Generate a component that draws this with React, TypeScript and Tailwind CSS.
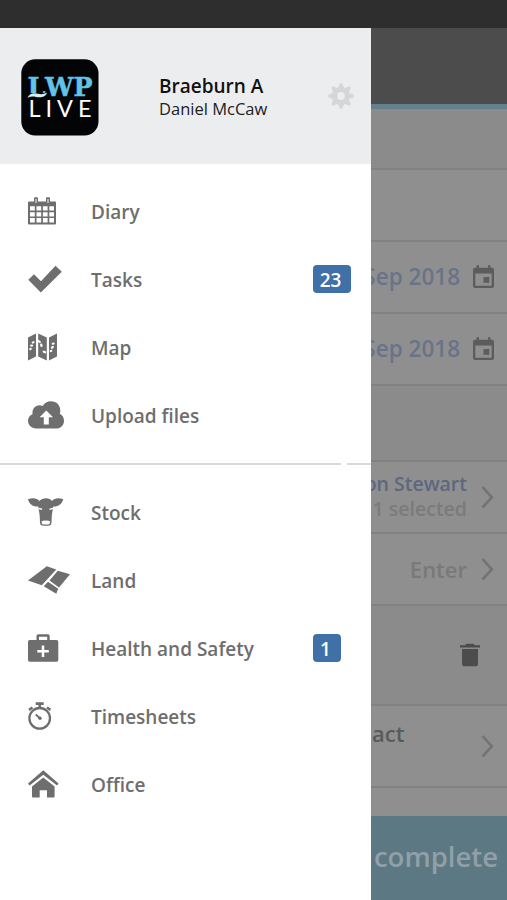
import type { ReactNode } from "react";

type MenuItem = {
  label: string;
  icon: ReactNode;
  badge?: string;
  badgeClass?: string;
};

const CalendarIcon = () => (
  <svg width="29" height="28" viewBox="0 0 29 28" className="block">
    <path
      fill="currentColor"
      fillRule="evenodd"
      d="M1 4.500h5V1.500Q6 0.300 7 0.300H9Q10 0.300 10 1.500V4.500H18V1.500Q18 0.300 19 0.300H21Q22 0.300 22 1.500V4.500H27Q28 4.500 28 5.500V26.500Q28 27.500 27 27.500H1Q0 27.500 0 26.500V5.500Q0 4.500 1 4.500ZM2 9.300V13.500H6.800V9.300ZM8.500 9.300V13.500H13.200V9.300ZM14.900 9.300V13.500H19.600V9.300ZM21.300 9.300V13.500H26V9.300ZM2 15.200V19.400H6.800V15.200ZM8.500 15.200V19.400H13.200V15.200ZM14.900 15.200V19.400H19.600V15.200ZM21.300 15.200V19.400H26V15.200ZM2 21.100V25.500H6.800V21.100ZM8.500 21.100V25.500H13.200V21.100ZM14.900 21.100V25.500H19.600V21.100ZM21.300 21.100V25.500H26V21.100Z"
    />
    <path d="M8 2v4M20 2v4" stroke="#fff" strokeWidth="1" />
  </svg>
);

const CheckIcon = () => (
  <svg width="34" height="28" viewBox="0 0 34 28" className="block">
    <path d="M.3 14.800 6 9.200 13 16.200 27.500 .8 33.800 6.700 12.800 27.500Z" fill="currentColor" />
  </svg>
);

const MapIcon = () => (
  <svg width="30" height="28" viewBox="0 0 30 28" className="block">
    <path d="M0 4.500 8 0.500V23.500L0 27.500ZM10.200 0.500 18.800 4.500V27.500L10.200 23.500ZM21 4.500 29 0.500V23.500L21 27.500Z" fill="currentColor" />
    <path
      d="M4.800 9.500l.8-.2M3.200 12.600h.8M2.300 16.200l.3-.3M10.800 8.200l1 .8M13.200 11.500l.3 1.500M15.700 18.700l1.500.6M24.800 10.700l.8-.2M24 14.800l.8-.8M22.800 18l.5-.2"
      stroke="#fff"
      strokeWidth="2.200"
      strokeLinecap="round"
    />
  </svg>
);

const CloudIcon = () => (
  <svg width="36" height="28" viewBox="0 0 36 28" className="block">
    <path
      d="M8 27.500C3.500 27.500 0 24 0 19.800 0 16.800 1.800 14.300 4.500 13.200 4 8 7.200 4.300 11.500 4.300 12.700 4.300 13.700 4.500 14.700 5 16.300 2 19.300.3 23 .3 28.500.3 32.500 4.400 32.300 10 32.300 11 32.100 11.800 31.800 12.700 34.400 14 36 16.700 36 19.700 36 24.200 32.600 27.500 28.500 27.500Z"
      fill="currentColor"
    />
    <path d="M18.300 9.500 25 16.300H20.800V23.500H15.800V16.300H11.600Z" fill="#fff" />
  </svg>
);

const CowIcon = () => (
  <svg width="36" height="28" viewBox="0 0 36 28" className="block">
    <path
      d="M0 1.200C4-.3 9-.2 11.500 3 13 1 15.500.2 18 .2S23 1 24 3C26.500-.2 31-.3 35.200 1.200 34.200 6 30 9 25 8.500 25 12 24 15 23.800 18L23.500 24.500Q23.300 27.700 20 27.700H15.500Q12.200 27.700 12 24.500L11.700 18C11.500 15 10.500 12 10.400 8.500 5 9 1 6 0 1.200Z"
      fill="currentColor"
    />
    <path d="M13.400 23.500Q14.500 22.400 17.800 22.400T22.200 23.500L21.500 26Q21 26.500 17.800 26.500T14.100 26Z" fill="#fff" />
    <path d="M10.500 9.800l3.600.8v1.400l-3.400-.8ZM25.100 9.800l-3.600.8v1.400l3.400-.8Z" fill="#fff" />
  </svg>
);

const LandIcon = () => (
  <svg width="42" height="28" viewBox="0 0 42 28" className="block">
    <path
      d="M0 14.500 18.800 .3 28.300 3.500 13.800 19.300ZM29.800 4.800 42 8.200 31 21.500 21.500 14.500ZM20 15.800 30.200 22.700 28.300 27.700 15.700 20.300Z"
      fill="currentColor"
    />
  </svg>
);

const MedkitIcon = () => (
  <svg width="31" height="28" viewBox="0 0 31 28" className="block">
    <path
      fillRule="evenodd"
      d="M8.500 6V2Q8.500 .3 10.200 .3H20Q21.700 .3 21.700 2V6H28.500Q30.300 6 30.300 7.800V26Q30.300 27.700 28.500 27.700H1.800Q0 27.700 0 26V7.800Q0 6 1.800 6ZM11 6H19.200V2.700H11Z"
      fill="currentColor"
    />
    <path d="M15 11.500V23M9.300 17.200H20.800" stroke="#fff" strokeWidth="2.500" />
  </svg>
);

const StopwatchIcon = () => (
  <svg width="24" height="28" viewBox="0 0 24 28" className="block" fill="none" stroke="currentColor">
    <circle cx="11.700" cy="16.300" r="10.300" strokeWidth="2.300" />
    <path d="M7.700 1.600H15.700M11.700 1.500V5.500M1 7.800 4.500 5.500M22.400 7.800 18.900 5.500" strokeWidth="2.600" />
    <path d="M7.700 12.500 11.700 16" strokeWidth="1.800" />
    <circle cx="12" cy="16.300" r="1.700" fill="currentColor" stroke="none" />
  </svg>
);

const HomeIcon = () => (
  <svg width="31" height="28" viewBox="0 0 31 28" className="block">
    <path d="M0 13.600 15.300 .3 30.600 13.600 29 15.600 15.300 4.700 1.600 15.600Z" fill="currentColor" />
    <path d="M4 16.400 15.300 7.400 26.600 16.400V26.400Q26.600 27.500 25.500 27.500H19V20.300H11.700V27.500H5.100Q4 27.500 4 26.400Z" fill="currentColor" />
  </svg>
);

const GearIcon = () => (
  <svg width="26" height="26" viewBox="-13 -13 26 26" className="block" fill="#d5d6d8">
    <path
      fillRule="evenodd"
      d="M-9 0a9 9 0 1 0 18 0a9 9 0 1 0-18 0ZM-3.900 0a3.900 3.900 0 1 1 7.800 0a3.900 3.900 0 1 1-7.800 0Z"
    />
    {[0, 45, 90, 135, 180, 225, 270, 315].map((angle) => (
      <path key={angle} d="M-3.200-7.500-1.200-12.700H1.200L3.200-7.500Z" transform={`rotate(${angle})`} />
    ))}
  </svg>
);

const EventIcon = () => (
  <svg width="21" height="24" viewBox="0 0 21 24" className="block shrink-0" fill="#5c5c5c">
    <path
      fillRule="evenodd"
      d="M2 2.800H3.500V.3H6V2.800H15V.3H17.500V2.800H19Q21 2.800 21 4.800V21Q21 23 19 23H2Q0 23 0 21V4.800Q0 2.800 2 2.800ZM2.300 8.500V20.700H18.700V8.500Z"
    />
    <path d="M10.500 12H16.300V17.800H10.500Z" />
  </svg>
);

const TrashIcon = () => (
  <svg width="20" height="24" viewBox="0 0 20 24" className="block" fill="#4c4c4c">
    <path d="M0 2.200H5L6.500 .8H13.500L15 2.200H20V4.500H0ZM2 6H18V21Q18 23.300 16 23.300H4Q2 23.300 2 21Z" />
  </svg>
);

const ChevronIcon = () => (
  <svg width="14" height="24" viewBox="0 0 14 24" className="block shrink-0">
    <path d="M1.500 2 10.800 12.300 1.500 22.500" fill="none" stroke="#737373" strokeWidth="2.600" />
  </svg>
);

const Logo = () => (
  <svg width="78" height="77" viewBox="0 0 78 77" className="mt-0.5 block">
    <rect x="0.300" y="0.300" width="77.200" height="76.200" rx="14" fill="#030405" />
    <g className="font-['DejaVu_Serif',serif] text-[26px] font-bold" fill="#62c3e9" stroke="#62c3e9" strokeWidth="0.500">
      <text x="6.500" y="36.500" textLength="18" lengthAdjust="spacingAndGlyphs">
        L
      </text>
      <text x="24" y="37" textLength="47.500" lengthAdjust="spacingAndGlyphs">
        WP
      </text>
    </g>
    <path d="M6 38V34H25V38Z" fill="#030405" />
    <path d="M6.500 38.800C8.500 34 13 33.700 17 34.800 20 35.600 23 35.200 26 33.800 24.500 38.300 19.500 39 15 37.900 12 37.200 9.500 37.400 6.500 38.800Z" fill="#d4eef7" />
    <text x="7.500" y="58" className="font-[Lato,sans-serif] text-[23.500px]" fill="#fff" textLength="63" lengthAdjust="spacing">
      LIVE
    </text>
  </svg>
);

const mainItems: MenuItem[] = [
  { label: "Diary", icon: <CalendarIcon /> },
  { label: "Tasks", icon: <CheckIcon />, badge: "23", badgeClass: "w-[38px]" },
  { label: "Map", icon: <MapIcon /> },
  { label: "Upload files", icon: <CloudIcon /> },
];

const farmItems: MenuItem[] = [
  { label: "Stock", icon: <CowIcon /> },
  { label: "Land", icon: <LandIcon /> },
  { label: "Health and Safety", icon: <MedkitIcon />, badge: "1", badgeClass: "w-7" },
  { label: "Timesheets", icon: <StopwatchIcon /> },
  { label: "Office", icon: <HomeIcon /> },
];

function MenuList({ items }: { items: MenuItem[] }) {
  return (
    <ul>
      {items.map((item) => (
        <li key={item.label} className="flex h-[68px] items-center pl-7 text-[#6e6e6e]">
          <span className="mb-0.5 w-[63px] shrink-0">{item.icon}</span>
          <span className="w-[222px] whitespace-nowrap text-[19px] font-semibold leading-7">{item.label}</span>
          {item.badge && (
            <span className={`${item.badgeClass} mb-0.5 flex h-7 items-center justify-center rounded bg-[#3f70a8] pr-[3px] pt-0.5 text-[19px] font-semibold text-white`}>
              {item.badge}
            </span>
          )}
        </li>
      ))}
    </ul>
  );
}

function Drawer() {
  return (
    <aside className="flex w-[371px] shrink-0 flex-col bg-white">
      <header className="flex h-[136px] items-center bg-[#ecedef] pl-[21px]">
        <Logo />
        <div className="ml-[60px] w-[169px] pt-0.5">
          <p className="text-[19px] font-semibold leading-6 text-[#111]">Braeburn A</p>
          <p className="text-[16.5px] leading-[22px] text-[#222]">Daniel McCaw</p>
        </div>
        <GearIcon />
      </header>
      <nav className="pt-3.5">
        <MenuList items={mainItems} />
        <div className="mb-px flex h-7 items-center gap-1.5">
          <div className="h-0.5 w-[341px] bg-[#d9d9d9]" />
          <div className="h-0.5 flex-1 bg-[#d9d9d9]" />
        </div>
        <MenuList items={farmItems} />
      </nav>
    </aside>
  );
}

function DateRow() {
  return (
    <div className="flex h-[72px] items-center justify-end gap-[13px] border-b-2 border-[#818181] bg-[#8f8f8f] pr-[13px]">
      <span className="shrink-0 whitespace-nowrap text-[22.5px] font-semibold text-[#697389]">Sep 2018</span>
      <EventIcon />
    </div>
  );
}

function TaskForm() {
  return (
    <main className="flex min-w-0 flex-1 flex-col overflow-hidden bg-[#8b8b8b]">
      <div className="h-[76px] bg-[#4c4c4c]" />
      <div className="h-[5px] bg-[#63818c]" />
      <div className="h-[61px] border-b-2 border-[#818181]" />
      <div className="h-[72px] border-b-2 border-[#818181] bg-[#8f8f8f]" />
      <DateRow />
      <DateRow />
      <div className="h-[76px] border-b-2 border-[#818181]" />
      <div className="flex h-[72px] items-center justify-end gap-3.5 border-b-2 border-[#818181] bg-[#8f8f8f] pr-3">
        <div className="mb-0.5 shrink-0 whitespace-nowrap text-right text-[19.5px] font-semibold leading-[25px]">
          <p className="text-[#5d6780]">on Stewart</p>
          <p className="text-[#7b7b7b]">1 selected</p>
        </div>
        <ChevronIcon />
      </div>
      <div className="flex h-[72px] items-center justify-end gap-3.5 border-b-2 border-[#818181] bg-[#8f8f8f] pr-3">
        <span className="text-[22px] font-semibold text-[#797979]">Enter</span>
        <ChevronIcon />
      </div>
      <div className="flex h-[100px] items-center justify-end border-b-2 border-[#818181] pr-[27px]">
        <TrashIcon />
      </div>
      <div className="flex h-[82px] items-center justify-between border-b-2 border-[#818181] bg-[#8f8f8f] pr-3">
        <span className="pb-[26px] pl-px text-[22px] font-semibold text-[#5a5a5a]">act</span>
        <ChevronIcon />
      </div>
      <div className="h-7 bg-[#8f8f8f]" />
      <div className="flex flex-1 items-center justify-end bg-[#5c7883] pb-0.5 pr-[9px]">
        <span className="shrink-0 text-[27.500px] font-semibold text-[#91a0a8]">complete</span>
      </div>
    </main>
  );
}

export default function App() {
  return (
    <div className="flex h-[900px] w-[507px] flex-col overflow-hidden font-['Open_Sans','Noto_Sans',sans-serif]">
      <div className="h-7 shrink-0 bg-[#2e2e2e]" />
      <div className="flex min-h-0 flex-1">
        <Drawer />
        <TaskForm />
      </div>
    </div>
  );
}
